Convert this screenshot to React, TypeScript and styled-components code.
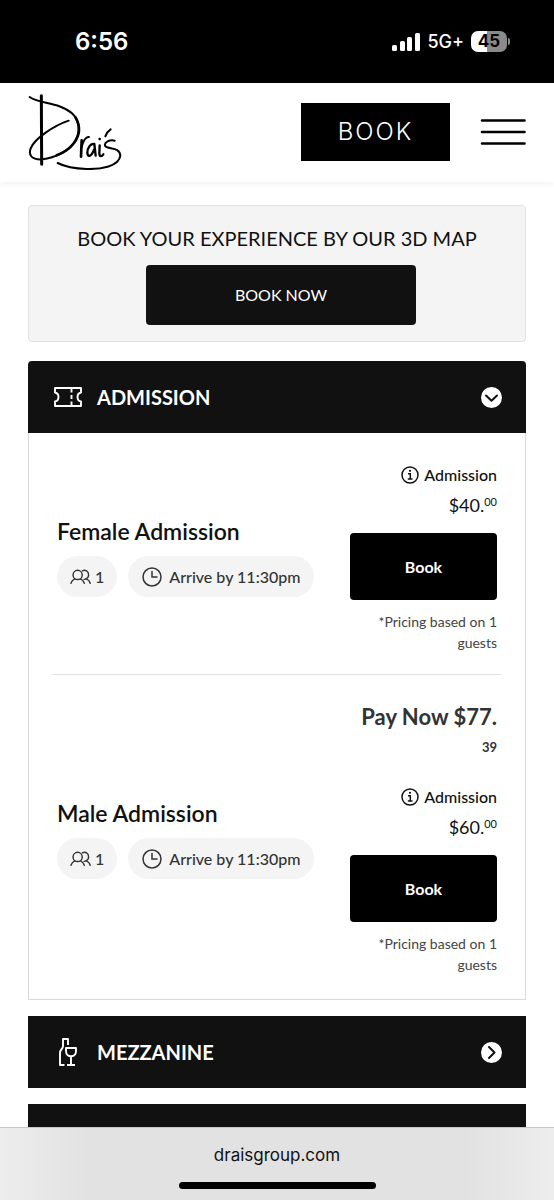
import React from "react";
import styled, { createGlobalStyle, css } from "styled-components";

const GlobalStyle = createGlobalStyle`
  *, *::before, *::after { box-sizing: border-box; }
  body {
    margin: 0;
    background: #fff;
    color: #111;
    font-family: Lato, "Open Sans", sans-serif;
    font-size: 16px;
    overflow: hidden;
  }
  button { font: inherit; border: 0; cursor: pointer; }
  h2, h3, p { margin: 0; }
`;

const systemFont = css`
  font-family: Inter, Roboto, sans-serif;
`;

const StatusBar = styled.div`
  ${systemFont}
  display: flex;
  align-items: center;
  justify-content: space-between;
  height: 83px;
  padding: 0 44px 0 75px;
  background: #000;
  color: #fff;
`;

const Clock = styled.time`
  font-size: 24px;
  font-weight: 600;
`;

const StatusIcons = styled.div`
  display: flex;
  align-items: center;
  gap: 7px;
  font-size: 18px;
  font-weight: 500;
`;

const BatteryShell = styled.div`
  display: flex;
  align-items: center;
  gap: 1px;

  &::after {
    content: "";
    width: 2px;
    height: 7px;
    border-radius: 0 2px 2px 0;
    background: #8a8a8a;
  }
`;

const BatteryLevel = styled.div`
  width: 36px;
  height: 21px;
  border-radius: 7px;
  background: linear-gradient(90deg, #fff 45%, #8a8a8a 45%);
  color: #000;
  font-size: 17px;
  font-weight: 700;
  line-height: 21px;
  text-align: center;
`;

const Header = styled.header`
  display: flex;
  align-items: center;
  height: 99px;
  padding: 0 28px 2px;
  background: #fff;
  box-shadow: 0 2px 6px rgba(0, 0, 0, 0.06);
`;

const LogoLink = styled.a`
  display: block;
  margin-right: auto;
  line-height: 0;
  color: #000;
`;

const HeaderBook = styled.button`
  width: 149px;
  height: 58px;
  margin-right: 30px;
  padding: 0;
  background: #000;
  color: #fff;
  font-family: Inter, sans-serif;
  font-size: 24px;
  font-weight: 300;
  letter-spacing: 2px;
`;

const MenuButton = styled.button`
  padding: 0;
  background: none;
  line-height: 0;
  color: #000;
`;

const Main = styled.main`
  display: flex;
  flex-direction: column;
  padding: 23px 28px 0;
`;

const Promo = styled.section`
  display: flex;
  flex-direction: column;
  align-items: center;
  padding: 17px 16px 16px;
  border: 1px solid #e2e2e2;
  border-radius: 4px;
  background: #f4f4f4;
`;

const PromoTitle = styled.h2`
  font-size: 20px;
  font-weight: 400;
  line-height: 30px;
  text-align: center;
`;

const PromoButton = styled.button`
  width: 270px;
  height: 60px;
  margin: 12px 0 0 8px;
  padding: 0 0 2px;
  border-radius: 4px;
  background: #111;
  color: #fff;
  font-size: 16px;
`;

const Accordion = styled.div`
  display: flex;
  flex-direction: column;
  gap: 16px;
  margin-top: 19px;
`;

const SectionHeader = styled.button<{ $rounded?: boolean }>`
  display: flex;
  align-items: center;
  width: 100%;
  height: 72px;
  padding: 0 24px 0 25px;
  border-radius: ${(p) => (p.$rounded ? "4px 4px 0 0" : "0")};
  background: #111;
  color: #fff;
  text-align: left;
`;

const IconSlot = styled.span`
  display: flex;
  justify-content: center;
  width: 30px;
  margin-right: 14px;
`;

const SectionTitle = styled.span`
  flex: 1;
  font-size: 20px;
  font-weight: 700;
`;

const SectionBody = styled.div`
  padding: 0 24px;
  border: 1px solid #d9d9d9;
  border-top: 0;
`;

const Ticket = styled.article`
  display: grid;
  grid-template-columns: 1fr 147px;
  align-items: center;
  padding: 27px 4px 21px;

  & + & {
    border-top: 1px solid #e0e0e0;
    padding-bottom: 24px;
  }
`;

const TicketName = styled.h3`
  margin-bottom: 10px;
  font-size: 23px;
  font-weight: 600;
  line-height: 30px;
`;

const Pills = styled.div`
  display: flex;
  gap: 11px;
`;

const Pill = styled.span<{ $wide?: boolean }>`
  display: flex;
  align-items: center;
  gap: ${(p) => (p.$wide ? "7px" : "4px")};
  height: 41px;
  padding: 0 ${(p) => (p.$wide ? "14px" : "13px")};
  border-radius: 21px;
  background: #f4f4f4;
  color: #333;
  font-size: 16px;
  font-weight: 500;
`;

const PriceColumn = styled.div`
  display: flex;
  flex-direction: column;
  text-align: right;
`;

const PayNow = styled.p`
  margin-bottom: 20px;
  color: #333;
  font-size: 22px;
  font-weight: 700;
  line-height: 30px;
`;

const Cents = styled.span`
  display: block;
  font-size: 13px;
`;

const PriceKind = styled.p`
  display: flex;
  align-items: center;
  justify-content: flex-end;
  gap: 5px;
  font-size: 16px;
  font-weight: 500;
  line-height: 30px;
`;

const Price = styled.p`
  display: flex;
  justify-content: flex-end;
  font-size: 18px;
  line-height: 30px;
`;

const PriceCents = styled.span`
  font-size: 11px;
  line-height: 24px;
`;

const BookButton = styled.button`
  height: 67px;
  margin: 13px 0 11px;
  border-radius: 4px;
  background: #000;
  color: #fff;
  font-size: 16px;
  font-weight: 700;
`;

const Note = styled.p`
  color: #444;
  font-size: 14px;
  line-height: 21px;
`;

const BrowserBar = styled.footer`
  ${systemFont}
  position: fixed;
  inset: auto 0 0;
  display: flex;
  flex-direction: column;
  align-items: center;
  padding: 15px 0 11px;
  border-top: 1px solid #c8c8c8;
  background: linear-gradient(90deg, #ededed, #e2e2e2 16%, #e2e2e2 84%, #ededed);
`;

const Address = styled.span`
  font-size: 17px;
  line-height: 24px;
`;

const HomeIndicator = styled.div`
  width: 197px;
  height: 7px;
  margin-top: 15px;
  border-radius: 4px;
  background: #000;
`;

const Logo = () => (
  <svg width="95" height="77" viewBox="22 24 285 231" fill="none" stroke="currentColor" strokeLinecap="round" strokeLinejoin="round">
    <path strokeWidth="9" d="M62 32 63 238" />
    <path strokeWidth="6" d="M27 36C52 56 118 52 154 85C178 108 182 142 160 174C144 197 105 218 65 223C32 225 23 210 30 190C42 160 100 122 144 107" />
    <path strokeWidth="8" d="M165 98C180 125 178 150 160 174C148 190 130 203 108 211" />
    <path strokeWidth="8" d="M183 166 181 215" />
    <path strokeWidth="6" d="M183 186C187 168 196 154 205 156" />
    <path strokeWidth="7" d="M220 178C211 173 200 189 200 203C201 219 213 214 220 194M221 177 225 212M237 181 236 206C237 217 244 214 248 208" />
    <circle cx="237" cy="162" r="2" strokeWidth="4" />
    <path strokeWidth="6" d="M270 133C262 138 257 146 254 154" />
    <path strokeWidth="6" d="M282 167C267 163 250 172 253 182C260 194 298 184 299 212C295 244 242 253 198 252C160 251 132 245 111 234" />
  </svg>
);

const SignalIcon = () => (
  <svg width="28" height="18" viewBox="0 0 28 18" fill="#fff" aria-label="Signal">
    <rect x="0" y="12" width="5" height="6" rx="1.500" />
    <rect x="8" y="8" width="5" height="10" rx="1.500" />
    <rect x="15" y="4" width="5" height="14" rx="1.500" />
    <rect x="23" y="0" width="5" height="18" rx="1.500" />
  </svg>
);

const MenuIcon = () => (
  <svg width="46" height="28" viewBox="0 0 46 28" stroke="currentColor" strokeWidth="2.600" strokeLinecap="round">
    <path d="M2 2.500H44.500M2 14H44.500M2 25.500H44.500" />
  </svg>
);

const TicketIcon = () => (
  <svg width="28" height="20" viewBox="0 0 28 20" fill="none" stroke="currentColor" strokeWidth="1.900" strokeLinejoin="round">
    <path d="M1 1H27V5.500C24.500 6 23.500 7.800 23.500 10S24.500 14 27 14.500V19H1V14.500C3.500 14 4.500 12.200 4.500 10S3.500 6 1 5.500Z" />
    <path d="M17.500 2V5.500M17.500 8V12M17.500 14.500V18" />
  </svg>
);

const BottleIcon = () => (
  <svg width="20" height="28" viewBox="0 0 20 28" fill="none" stroke="currentColor" strokeWidth="1.900" strokeLinejoin="round">
    <path d="M6.500 27H2V15C2 11 5 11.500 5 8V1H10V7" />
    <path d="M8 10H18V13C18 20 8 20 8 13ZM13 18.500V27M9 27H17" />
  </svg>
);

const ArrowBadge = ({ down }: { down?: boolean }) => (
  <svg width="21" height="21" viewBox="0 0 21 21" fill="none">
    <circle cx="10.500" cy="10.500" r="10.500" fill="#fff" />
    <path
      d={down ? "M5 8.500 10.500 13.800 16 8.500" : "M8 5 13.500 10.500 8 16"}
      stroke="#111"
      strokeWidth="2"
      strokeLinecap="round"
      strokeLinejoin="round"
    />
  </svg>
);

const GuestsIcon = () => (
  <svg width="21" height="16" viewBox="0 0 22 16" fill="none" stroke="#333" strokeWidth="1.500" strokeLinecap="round">
    <circle cx="8" cy="5.800" r="4.800" />
    <path d="M1 14.500C1.800 12 3.200 10.800 5 10M15 14.500C14.200 12 12.800 10.800 11 10" />
    <path d="M13 1.500C16 0 19.500 2 19.500 5.800C19.500 8.400 17.300 10.500 14.800 10.500M17.500 10.200C19.500 11 20.600 12.500 21.200 14.500" />
  </svg>
);

const ClockIcon = () => (
  <svg width="20" height="20" viewBox="0 0 20 20" fill="none" stroke="#333" strokeWidth="1.500" strokeLinecap="round">
    <circle cx="10" cy="10" r="9" />
    <path d="M10 4.500V10H15" />
  </svg>
);

const InfoIcon = () => (
  <svg width="18" height="18" viewBox="0 0 18 18" fill="none" stroke="#111" strokeWidth="1.500">
    <circle cx="9" cy="9" r="8" />
    <path d="M7 7.800H9.300V13M6.800 13H11.500" />
    <circle cx="9" cy="4.800" r="1.100" fill="#111" stroke="none" />
  </svg>
);

interface TicketData {
  name: string;
  dollars: number;
  payNow?: [string, string];
}

const tickets: TicketData[] = [
  { name: "Female Admission", dollars: 40 },
  { name: "Male Admission", dollars: 60, payNow: ["77", "39"] },
];

const TicketRow = ({ name, dollars, payNow }: TicketData) => (
  <Ticket>
    <div>
      <TicketName>{name}</TicketName>
      <Pills>
        <Pill><GuestsIcon />1</Pill>
        <Pill $wide><ClockIcon />Arrive by 11:30pm</Pill>
      </Pills>
    </div>
    <PriceColumn>
      {payNow && (
        <PayNow>
          Pay Now ${payNow[0]}.<Cents>{payNow[1]}</Cents>
        </PayNow>
      )}
      <PriceKind><InfoIcon />Admission</PriceKind>
      <Price>${dollars}.<PriceCents>00</PriceCents></Price>
      <BookButton type="button">Book</BookButton>
      <Note>*Pricing based on 1 guests</Note>
    </PriceColumn>
  </Ticket>
);

export default function App() {
  return (
    <>
      <GlobalStyle />
      <StatusBar>
        <Clock>6:56</Clock>
        <StatusIcons>
          <SignalIcon />
          <span>5G+</span>
          <BatteryShell><BatteryLevel>45</BatteryLevel></BatteryShell>
        </StatusIcons>
      </StatusBar>
      <Header>
        <LogoLink href="#" aria-label="Drai's"><Logo /></LogoLink>
        <HeaderBook type="button">BOOK</HeaderBook>
        <MenuButton type="button" aria-label="Menu"><MenuIcon /></MenuButton>
      </Header>
      <Main>
        <Promo>
          <PromoTitle>BOOK YOUR EXPERIENCE BY OUR 3D MAP</PromoTitle>
          <PromoButton type="button">BOOK NOW</PromoButton>
        </Promo>
        <Accordion>
          <section>
            <SectionHeader type="button" aria-expanded="true" $rounded>
              <IconSlot><TicketIcon /></IconSlot>
              <SectionTitle>ADMISSION</SectionTitle>
              <ArrowBadge down />
            </SectionHeader>
            <SectionBody>
              {tickets.map((ticket) => <TicketRow key={ticket.name} {...ticket} />)}
            </SectionBody>
          </section>
          <SectionHeader type="button" aria-expanded="false">
            <IconSlot><BottleIcon /></IconSlot>
            <SectionTitle>MEZZANINE</SectionTitle>
            <ArrowBadge />
          </SectionHeader>
          <SectionHeader type="button" aria-expanded="false" aria-label="More tables" />
        </Accordion>
      </Main>
      <BrowserBar>
        <Address>draisgroup.com</Address>
        <HomeIndicator />
      </BrowserBar>
    </>
  );
}
